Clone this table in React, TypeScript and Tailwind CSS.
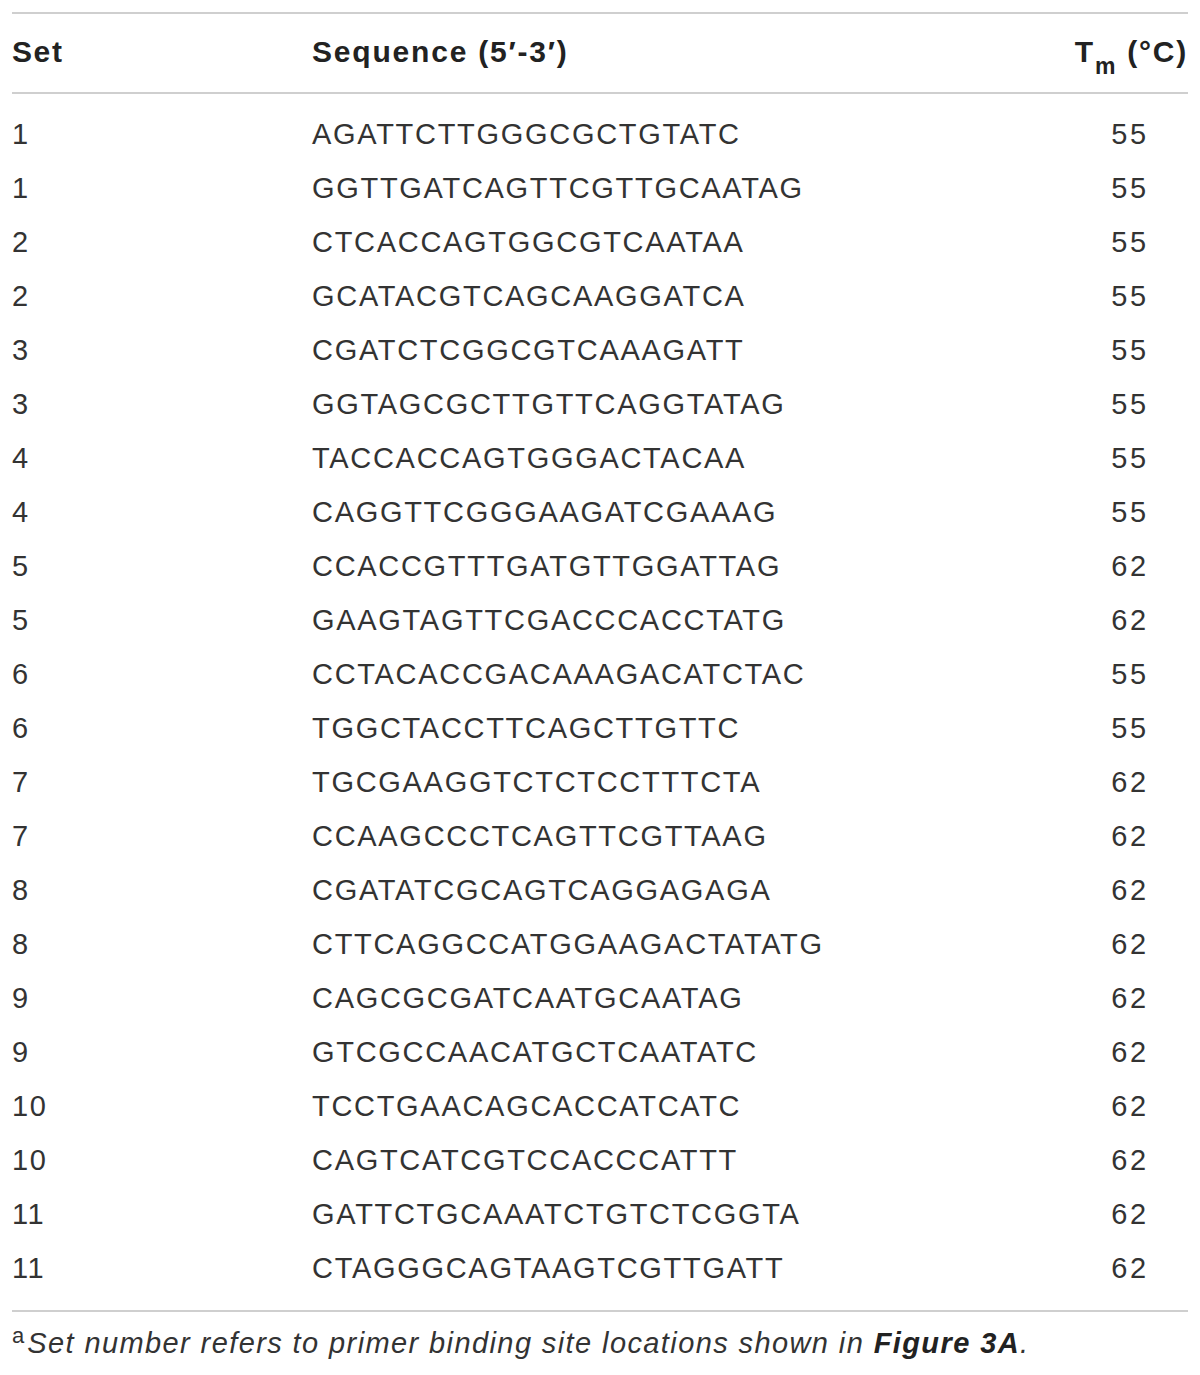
const rows: [string, string, string][] = [
  ['1', 'AGATTCTTGGGCGCTGTATC', '55'],
  ['1', 'GGTTGATCAGTTCGTTGCAATAG', '55'],
  ['2', 'CTCACCAGTGGCGTCAATAA', '55'],
  ['2', 'GCATACGTCAGCAAGGATCA', '55'],
  ['3', 'CGATCTCGGCGTCAAAGATT', '55'],
  ['3', 'GGTAGCGCTTGTTCAGGTATAG', '55'],
  ['4', 'TACCACCAGTGGGACTACAA', '55'],
  ['4', 'CAGGTTCGGGAAGATCGAAAG', '55'],
  ['5', 'CCACCGTTTGATGTTGGATTAG', '62'],
  ['5', 'GAAGTAGTTCGACCCACCTATG', '62'],
  ['6', 'CCTACACCGACAAAGACATCTAC', '55'],
  ['6', 'TGGCTACCTTCAGCTTGTTC', '55'],
  ['7', 'TGCGAAGGTCTCTCCTTTCTA', '62'],
  ['7', 'CCAAGCCCTCAGTTCGTTAAG', '62'],
  ['8', 'CGATATCGCAGTCAGGAGAGA', '62'],
  ['8', 'CTTCAGGCCATGGAAGACTATATG', '62'],
  ['9', 'CAGCGCGATCAATGCAATAG', '62'],
  ['9', 'GTCGCCAACATGCTCAATATC', '62'],
  ['10', 'TCCTGAACAGCACCATCATC', '62'],
  ['10', 'CAGTCATCGTCCACCCATTT', '62'],
  ['11', 'GATTCTGCAAATCTGTCTCGGTA', '62'],
  ['11', 'CTAGGGCAGTAAGTCGTTGATT', '62'],
]

export default function App() {
  return (
    <div className="w-[1200px] h-[1375px] bg-white px-3 pt-3 text-[#2a2a2a] font-['Liberation_Sans',Arial,sans-serif]">
      {/* Header */}
      <div className="grid grid-cols-[300px_1fr_120px] items-center h-[82px] pb-[3px] border-y-2 border-[#cfcfcf] text-[30px] font-bold text-[#222]">
        <div className="tracking-[1.6px]">Set</div>
        <div className="tracking-[1.8px]">Sequence (5′-3′)</div>
        <div className="text-right whitespace-nowrap tracking-[1.8px]">
          T<sub className="text-[23px] align-[-6px] tracking-[1.6px]">m</sub> (°C)
        </div>
      </div>

      {/* Body */}
      <div className="pt-[14px] pb-[14px] border-b-2 border-[#cfcfcf]">
        {rows.map(([set, seq, tm], i) => (
          <div key={i} className="grid grid-cols-[300px_1fr_120px] items-center h-[54px] text-[29px] text-[#333]">
            <div className="tracking-[1.5px]">{set}</div>
            <div className="tracking-[1.7px]">{seq}</div>
            <div className="text-center tracking-[2.6px] pl-[4px]">{tm}</div>
          </div>
        ))}
      </div>

      {/* Footnote */}
      <p className="pt-[13px] leading-[36px] text-[29px] italic text-[#333] tracking-[1.4px]">
        <sup className="relative -top-[10px] align-baseline text-[22px] leading-none not-italic mr-[3px] tracking-normal">a</sup>
        Set number refers to primer binding site locations shown in{' '}
        <span className="font-bold text-[#222]">Figure 3A</span>.
      </p>
    </div>
  )
}
